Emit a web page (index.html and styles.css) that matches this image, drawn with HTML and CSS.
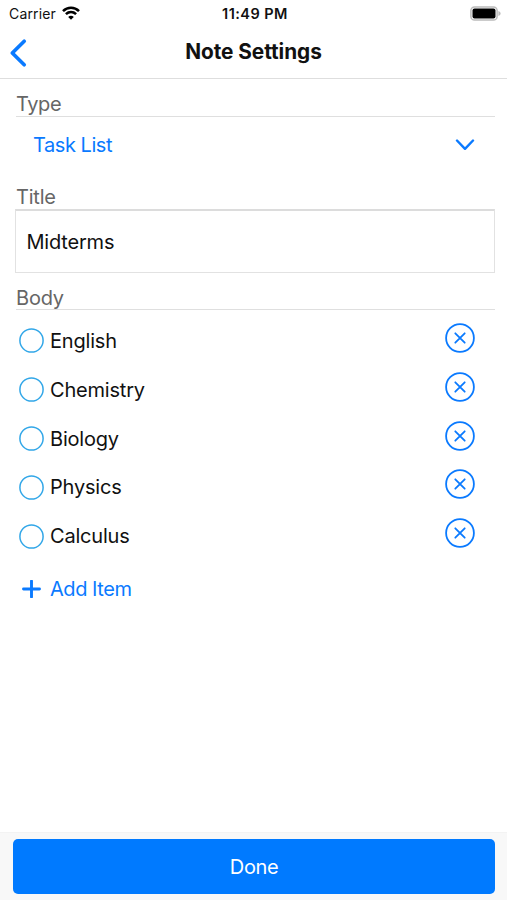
FILE: index.html
```html
<!DOCTYPE html>
<html lang="en">
<head>
<meta charset="utf-8">
<title>Note Settings</title>
<link rel="stylesheet" href="styles.css">
</head>
<body>
<svg class="symbols" width="0" height="0">
  <symbol id="remove" viewBox="0 0 30 30"><circle cx="15" cy="15" r="13.9"/><path d="M10.3 10.3l9.4 9.4M19.7 10.3l-9.4 9.4"/></symbol>
  <symbol id="check" viewBox="0 0 25 25"><circle cx="12.500" cy="12.500" r="11.600"/></symbol>
</svg>
<div class="screen">
  <div class="status">
    <div class="carrier"><span>Carrier</span>
      <svg class="wifi" width="18" height="14" viewBox="0 0 18 14"><path d="M1 5.1C5.6.7 12.4.7 17 5.1" /><path d="M3.9 8.1c3-2.7 7.2-2.7 10.2 0"/><path class="dot" d="M9 13.7L6.2 10.9c1.6-1.4 4-1.4 5.6 0z"/></svg>
    </div>
    <div class="time">11:49 PM</div>
    <svg class="battery" width="31" height="15" viewBox="0 0 31 15"><rect class="shell" x=".9" y=".9" width="26.2" height="13.2" rx="3.6"/><rect x="2.500" y="2.500" width="23" height="10" rx="2"/><path class="tip" d="M28.4 5v5c1.4-.5 2.2-1.4 2.2-2.5S29.800 5.500 28.400 5z"/></svg>
  </div>
  <header class="nav">
    <svg class="back" width="18" height="30" viewBox="0 0 18 30"><path d="M15.200 3.300L3.300 15l11.900 11.700"/></svg>
    <h1>Note Settings</h1>
    <span></span>
  </header>
  <main>
    <section class="type">
      <h2>Type</h2>
      <div class="select"><span>Task List</span>
        <svg width="20" height="12" viewBox="0 0 20 12"><path d="M2 1.500l8 8.300 8-8.300"/></svg>
      </div>
    </section>
    <section class="title">
      <h2>Title</h2>
      <div class="field">Midterms</div>
    </section>
    <section class="body">
      <h2>Body</h2>
      <ul>
        <li><svg class="check"><use href="#check"/></svg><span>English</span><svg class="remove"><use href="#remove"/></svg></li>
        <li><svg class="check"><use href="#check"/></svg><span>Chemistry</span><svg class="remove"><use href="#remove"/></svg></li>
        <li><svg class="check"><use href="#check"/></svg><span>Biology</span><svg class="remove"><use href="#remove"/></svg></li>
        <li><svg class="check"><use href="#check"/></svg><span>Physics</span><svg class="remove"><use href="#remove"/></svg></li>
        <li><svg class="check"><use href="#check"/></svg><span>Calculus</span><svg class="remove"><use href="#remove"/></svg></li>
      </ul>
      <div class="add"><svg width="19" height="18" viewBox="0 0 19 18"><path d="M9.500 1v16M1.500 9h16"/></svg><span>Add Item</span></div>
    </section>
  </main>
  <footer><div class="done">Done</div></footer>
</div>
</body>
</html>
```
FILE: styles.css
```css
* { box-sizing: border-box; }
body { margin: 0; background: #fff; color: #111; font: 400 20px/24px Inter, "Liberation Sans", sans-serif; letter-spacing: -0.2px; }
svg { display: block; fill: none; stroke: #0a7aff; stroke-linecap: round; stroke-linejoin: round; flex: none; }
.symbols { position: absolute; }
h1, h2, ul { margin: 0; padding: 0; }
.screen { height: 900px; display: flex; flex-direction: column; overflow: hidden; }
.status { height: 27px; display: grid; grid-template-columns: 1fr auto 1fr; align-items: center; padding: 0 6px 0 9px; font-size: 14px; line-height: 18px; letter-spacing: 0.15px; }
.carrier { display: flex; align-items: center; gap: 6px; }
.wifi { stroke: #000; stroke-width: 2.600; stroke-linecap: butt; margin-top: -1px; }
.wifi .dot { fill: #000; stroke: none; }
.time { font-size: 14.500px; font-weight: 600; letter-spacing: 0.45px; }
.battery { justify-self: end; fill: #000; stroke: none; margin-top: -1px; }
.battery .shell { fill: #fff; stroke: #bbb; stroke-width: 1.500; }
.battery .tip { fill: #bbb; }
.nav { height: 52px; border-bottom: 1px solid #dedede; display: grid; grid-template-columns: 1fr auto 1fr; align-items: center; padding: 0 9px 0 9px; }
.nav h1 { font-size: 20.800px; line-height: 24px; font-weight: 700; letter-spacing: -0.05px; padding-bottom: 2px; }
.back { stroke-width: 3.700; }
main { flex: 1; padding: 0 12px 0 16px; }
h2 { font-size: 20px; line-height: 24px; font-weight: 400; color: #666; border-bottom: 1px solid #dfdfdf; }
.type { padding-top: 13px; }
.type h2 { letter-spacing: -0.400px; }
.select { height: 56px; padding: 0 20px 0 17px; display: flex; align-items: center; justify-content: space-between; color: #0a7aff; letter-spacing: -0.450px; }
.select svg { stroke-width: 2.400; }
.title { padding-top: 12px; }
.title h2 { border: 0; }
.field { height: 64px; margin-left: -1px; border: 1px solid #e2e2e2; border-top: 2px solid #dcdcdc; padding: 0 10.500px; display: flex; align-items: center; color: #111; }
.body { padding-top: 13px; }
.body h2 { line-height: 24px; height: 24px; }
ul { list-style: none; padding-top: 6.500px; }
li { height: 48.850px; display: flex; align-items: center; padding: 0 20px 0 3px; }
.check { width: 25px; height: 25px; stroke: #32a7e8; stroke-width: 1.500; margin-right: 6px; }
.remove { width: 30px; height: 30px; margin: -6px 0 0 auto; stroke-width: 1.800; }
.add { height: 56px; display: flex; align-items: center; gap: 9px; padding-left: 6px; color: #0a7aff; letter-spacing: -0.450px; }
.add svg { stroke-width: 2.900; }
footer { height: 68px; background: #f8f8f8; border-top: 1px solid #f3f3f3; padding: 6px 12px 6px 13px; }
.done { height: 55px; border-radius: 5px; background: #007aff; color: #fff; display: flex; align-items: center; justify-content: center; letter-spacing: -0.400px; }
```
